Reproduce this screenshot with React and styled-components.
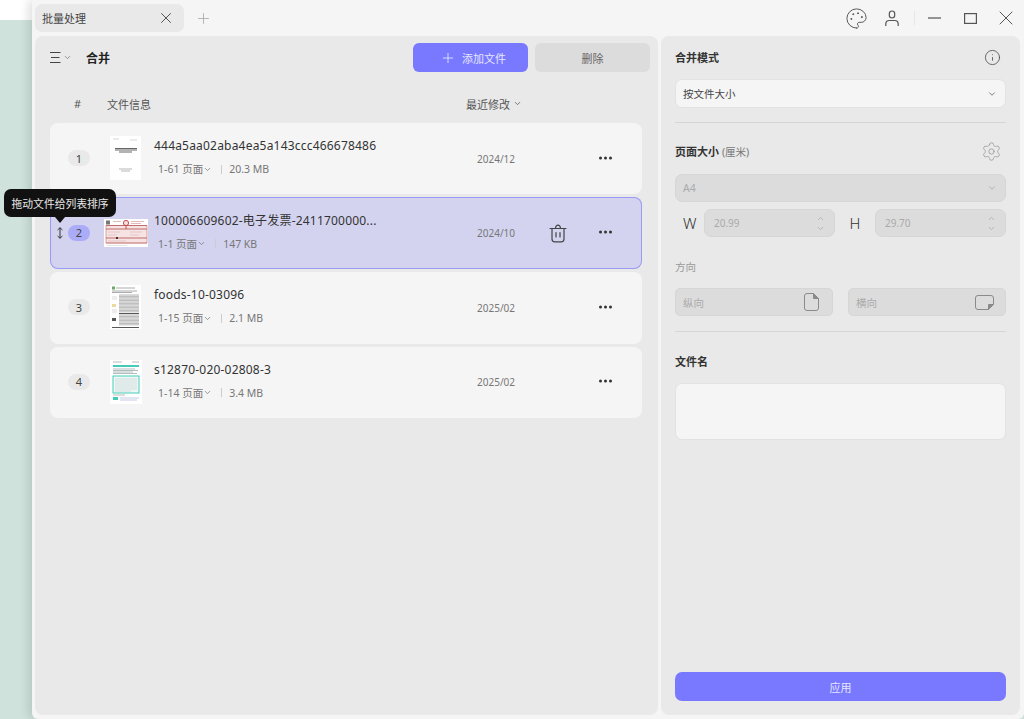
import styled, { createGlobalStyle } from 'styled-components';
import { ChevronDown, ChevronUp, Info, Palette, Plus, Settings, X } from 'lucide-react';

const GlobalStyle = createGlobalStyle`
  html, body {
    margin: 0;
    padding: 0;
    height: 100%;
  }
  body {
    font-family: "Noto Sans", "Noto Sans CJK SC", sans-serif;
    color: #333;
  }
  * {
    box-sizing: border-box;
  }
`;

const Desktop = styled.div`
  width: 1024px;
  height: 719px;
  overflow: hidden;
  padding-left: 32px;
  background: linear-gradient(#fff 0, #fff 20px, #cfe3dc 20px);
`;

const Window = styled.div`
  height: 100%;
  display: flex;
  flex-direction: column;
  padding: 0 3px 4px 3px;
  background: #f5f5f5;
  border-radius: 0 0 6px 6px;
  box-shadow: -4px 0 10px rgba(0, 0, 0, 0.12);
`;

const TitleBar = styled.div`
  flex: 0 0 36px;
  display: flex;
  align-items: flex-start;
  padding-top: 4px;
`;

const Tab = styled.div`
  width: 149px;
  height: 28px;
  display: flex;
  align-items: center;
  justify-content: space-between;
  padding: 0 9px 0 7px;
  background: #e9e9e9;
  border-radius: 7px;
  font-size: 11px;
  color: #444;
`;

const NewTab = styled.div`
  width: 38px;
  height: 28px;
  display: flex;
  align-items: center;
  justify-content: center;
  color: #aaa;
`;

const WindowTools = styled.div`
  margin-left: auto;
  height: 28px;
  display: flex;
  align-items: center;
  color: #555;
`;

const ToolSlot = styled.div`
  width: ${(p) => p.$w}px;
  display: flex;
  justify-content: center;
`;

const ToolDivider = styled.div`
  width: 1px;
  height: 14px;
  margin: 0 4px;
  background: #e6e6e6;
`;

const Panels = styled.div`
  flex: 1;
  min-height: 0;
  display: flex;
  gap: 3px;
`;

const LeftPanel = styled.div`
  width: 623px;
  padding: 7px 8px 0 15px;
  background: #e9e9e9;
  border-radius: 8px;
`;

const RightPanel = styled.div`
  width: 359px;
  display: flex;
  flex-direction: column;
  padding: 0 14px 14px;
  background: #e9e9e9;
  border-radius: 8px;
`;

const Toolbar = styled.div`
  display: flex;
  align-items: center;
  height: 29px;
`;

const MenuToggle = styled.div`
  width: 36px;
  display: flex;
  align-items: center;
  gap: 2px;
  color: #444;
`;

const ToolbarTitle = styled.div`
  flex: 1;
  font-size: 12px;
  font-weight: 700;
  color: #222;
`;

const ActionButton = styled.div`
  width: 115px;
  height: 29px;
  display: flex;
  align-items: center;
  justify-content: center;
  gap: 6px;
  margin-left: 7px;
  padding-left: ${(p) => (p.$primary ? 5 : 0)}px;
  border-radius: 6px;
  font-size: 11px;
  background: ${(p) => (p.$primary ? '#7879ff' : '#dcdcdc')};
  color: ${(p) => (p.$primary ? '#e6e6ff' : '#666')};
`;

const ListHeader = styled.div`
  height: 51px;
  display: flex;
  align-items: center;
  padding-top: 12px;
  font-size: 11px;
  color: #555;
`;

const HeadNumber = styled.div`
  width: 57px;
  padding-left: 24px;
`;

const HeadInfo = styled.div`
  width: 359px;
`;

const HeadDate = styled.div`
  display: flex;
  align-items: center;
  gap: 3px;
`;

const RowList = styled.div`
  width: 592px;
  display: flex;
  flex-direction: column;
  gap: 3.1px;
`;

const Row = styled.div`
  position: relative;
  height: ${(p) => (p.$active ? 72 : 71.2)}px;
  display: flex;
  align-items: center;
  border-radius: 8px;
  background: ${(p) => (p.$active ? '#d3d3f0' : '#f5f5f5')};
  box-shadow: ${(p) => (p.$active ? 'inset 0 0 0 1px #9a9bf5' : 'none')};
`;

const DragSlot = styled.div`
  width: 18px;
  padding-left: 7px;
  display: flex;
  color: #333;
`;

const NumberPill = styled.div`
  width: 22px;
  height: 16px;
  margin: -1px 20px 0 0;
  display: flex;
  align-items: center;
  justify-content: center;
  border-radius: 8px;
  font-size: 11px;
  color: #444;
  background: ${(p) => (p.$active ? '#abacf8' : '#e9e9e9')};
`;

const ThumbSlot = styled.div`
  margin-left: ${(p) => (p.$wide ? -6 : 0)}px;
  margin-top: -1px;
  flex: 0 0 ${(p) => (p.$wide ? 50 : 44)}px;
  display: flex;
  svg {
    display: block;
  }
`;

const FileInfo = styled.div`
  width: 323px;
  display: flex;
  flex-direction: column;
  gap: 8px;
  margin-top: -3px;
`;

const FileName = styled.div`
  font-size: 12px;
  line-height: 16px;
  letter-spacing: 0.2px;
  color: #333;
  white-space: nowrap;
`;

const FileMeta = styled.div`
  display: flex;
  align-items: center;
  padding-left: 4px;
  font-size: 10.5px;
  line-height: 14px;
  color: #777;
`;

const MetaDivider = styled.span`
  width: 1px;
  height: 9px;
  margin: 0 7px 0 9px;
  background: #ccc;
`;

const DateCell = styled.div`
  width: 72px;
  font-size: 10px;
  color: #777;
`;

const TrashSlot = styled.div`
  width: 37px;
  display: flex;
  color: #444;
`;

const MoreDots = styled.div`
  position: absolute;
  right: 30px;
  top: 50%;
  margin-top: -1px;
  display: flex;
  gap: 2px;
  transform: translateY(-50%);
  span {
    width: 3px;
    height: 3px;
    border-radius: 50%;
    background: #333;
  }
`;

const Tooltip = styled.div`
  position: absolute;
  left: -46px;
  top: -8px;
  height: 28px;
  padding: 0 7.5px;
  display: flex;
  align-items: center;
  background: #111;
  border-radius: 7px;
  color: #e8e8e8;
  font-size: 10.8px;
  white-space: nowrap;
  z-index: 2;
  &::after {
    content: '';
    position: absolute;
    left: 51px;
    bottom: -6px;
    border-left: 5px solid transparent;
    border-right: 5px solid transparent;
    border-top: 6px solid #111;
  }
`;

const SectionHead = styled.div`
  display: flex;
  align-items: center;
  justify-content: space-between;
  height: 16px;
  font-size: 11px;
  font-weight: 700;
  color: #333;
  margin-top: ${(p) => p.$top}px;
  small {
    font-size: 10.5px;
    font-weight: 400;
    color: #777;
  }
  svg {
    color: ${(p) => p.$iconColor || '#444'};
    margin-right: ${(p) => p.$iconGap || 5}px;
  }
`;

const SelectBox = styled.div`
  height: ${(p) => (p.$disabled ? 28 : 29)}px;
  margin-top: ${(p) => p.$top}px;
  display: flex;
  align-items: center;
  justify-content: space-between;
  padding: 0 8px 0 7px;
  border-radius: 7px;
  font-size: 10.5px;
  background: ${(p) => (p.$disabled ? '#dcdcdc' : '#f5f5f5')};
  color: ${(p) => (p.$disabled ? '#aaa' : '#444')};
  border: 1px solid ${(p) => (p.$disabled ? '#d6d6d6' : '#e2e2e2')};
`;

const Divider = styled.div`
  height: 1px;
  margin-top: ${(p) => p.$top}px;
  background: #d6d6d6;
`;

const SizeRow = styled.div`
  display: flex;
  align-items: center;
  margin-top: 7px;
`;

const SizeLetter = styled.div`
  width: ${(p) => p.$w}px;
  text-align: ${(p) => (p.$center ? 'center' : 'left')};
  padding-left: ${(p) => (p.$center ? 0 : 8)}px;
  font-size: 15px;
  font-weight: 300;
  color: #333;
`;

const NumberInput = styled.div`
  width: 131px;
  height: 28px;
  display: flex;
  align-items: center;
  justify-content: space-between;
  padding: 0 9px;
  background: #dcdcdc;
  border: 1px solid #d6d6d6;
  border-radius: 7px;
  font-size: 10px;
  color: #aaa;
`;

const Stepper = styled.div`
  display: flex;
  flex-direction: column;
  gap: 1px;
`;

const MutedLabel = styled.div`
  margin-top: 22px;
  font-size: 10.5px;
  line-height: 16px;
  color: #999;
`;

const OrientationRow = styled.div`
  display: flex;
  justify-content: space-between;
  margin-top: 13px;
`;

const OrientationButton = styled.div`
  width: 158px;
  height: 28px;
  display: flex;
  align-items: center;
  justify-content: space-between;
  padding: 0 ${(p) => p.$pad}px 0 7px;
  background: #dcdcdc;
  border: 1px solid #d6d6d6;
  border-radius: 5px;
  font-size: 10.5px;
  color: #aaa;
`;

const NameArea = styled.div`
  height: 57px;
  margin-top: 14px;
  background: #f5f5f5;
  border: 1px solid #e2e2e2;
  border-radius: 7px;
`;

const ApplyButton = styled.div`
  height: 29px;
  margin-top: auto;
  display: flex;
  align-items: center;
  justify-content: center;
  background: #7879ff;
  border-radius: 7px;
  font-size: 11px;
  color: #e6e6ff;
`;

// column lines for the small page previews
const lineRows = (start, count, step) =>
  Array.from({ length: count }, (_, i) => `M9 ${start + i * step}h20`).join('');

const PageThumb = ({ kind }) => {
  if (kind === 'invoice') {
    return (
      <svg width="44" height="28" viewBox="0 0 44 28">
        <rect width="44" height="28" fill="#fff" />
        <rect x="2" y="6.500" width="41" height="18" fill="#f6e4e4" />
        <rect x="2" y="1.500" width="4" height="4" fill="#777" />
        <circle cx="22" cy="4" r="2.600" fill="#f6dede" stroke="#d04a4a" />
        <path d="M9 2.500h8M27 2.500h13M27 4.500h10" stroke="#dca8a8" strokeWidth="0.800" />
        <path d="M2 6.500h41M2 10h41M2 19h41M2 24h41" stroke="#b54a4a" strokeWidth="0.800" />
        <path d="M2 6.500v17.500M43 6.500v17.500" stroke="#c66" strokeWidth="0.600" />
        <path d="M22 6.500v3.500" stroke="#d04a4a" />
        <rect x="12" y="18" width="2" height="2" fill="#333" />
        <path d="M4 13h12M4 16h9M26 13h12M26 16h9M4 22h18" stroke="#e3bcbc" strokeWidth="0.800" />
        <path d="M3 26.500h20" stroke="#ddd" strokeWidth="0.700" />
      </svg>
    );
  }
  if (kind === 'paper') {
    return (
      <svg width="31" height="44" viewBox="0 0 31 44">
        <rect width="31" height="44" fill="#fff" />
        <rect x="2" y="1.500" width="3" height="3" fill="#6a6" />
        <path d="M6 3h19M2 6h25M2 7.500h20" stroke="#888" strokeWidth="0.700" />
        <path d={lineRows(10, 13, 1.4)} stroke="#999" strokeWidth="0.700" />
        <path d={lineRows(30, 8, 1.4)} stroke="#999" strokeWidth="0.700" />
        <path d="M9 28.500h20M2 42.500h27" stroke="#444" strokeWidth="0.900" />
        <path d="M2 12h5M2 14h5M2 25h5M2 27h5" stroke="#ccc" strokeWidth="0.700" />
        <rect x="2" y="19" width="4" height="3" fill="#ead9a0" />
        <rect x="2" y="33" width="4" height="3" fill="#555" />
      </svg>
    );
  }
  if (kind === 'teal') {
    return (
      <svg width="32" height="44" viewBox="0 0 32 44">
        <rect width="32" height="44" fill="#fff" />
        <path d="M3 2h9M22 2h7" stroke="#aaa" strokeWidth="0.800" />
        <rect x="3" y="5" width="26" height="2" fill="#43cdb8" />
        <path d="M3 9h22M3 10.500h25M3 12h20M3 13.500h24" stroke="#7f9090" strokeWidth="0.600" />
        <rect x="3" y="16" width="26" height="17" fill="#eef7f5" stroke="#43cdb8" />
        <path d="M5 19h22M5 21h22M5 23h22M5 25h22M5 27h22M5 29h22M5 31h16" stroke="#c4d4d2" strokeWidth="0.700" />
        <path d="M3 35h12" stroke="#aaa" strokeWidth="0.800" />
        <rect x="3" y="37" width="5" height="3" fill="#43cdb8" />
        <path d="M10 38h19M10 40h17" stroke="#b8bfe0" strokeWidth="0.800" />
      </svg>
    );
  }
  return (
    <svg width="31" height="44" viewBox="0 0 31 44">
      <rect width="31" height="44" fill="#fff" />
      <path d="M3 3h6M20 4h7" stroke="#ccc" strokeWidth="0.800" />
      <path d="M5 12.500h22M5 14h22M9 16h13" stroke="#555" strokeWidth="0.900" />
      <path d="M9 33h13M11 35h9" stroke="#999" strokeWidth="0.700" />
    </svg>
  );
};

const TrashIcon = () => (
  <svg width="18" height="19" viewBox="0 0 18 19" fill="none" stroke="currentColor" strokeWidth="1.200" strokeLinecap="round">
    <path d="M1 4.500h16M6.500 4.200C6.800 2.200 7.600 1.200 9 1.200s2.200 1 2.500 3" />
    <path d="M3 4.500v10.500c0 1.800 1 2.800 2.800 2.800h6.400c1.800 0 2.800-1 2.800-2.800V4.500" />
    <path d="M7 8.500v4.500M11 8.500v4.500" />
  </svg>
);

const DragIcon = () => (
  <svg width="6" height="12" viewBox="0 0 6 12" fill="none" stroke="currentColor" strokeWidth="1">
    <path d="M3 .8v10.400M.6 3 3 .7 5.400 3M.6 9 3 11.300 5.400 9" />
  </svg>
);

const ListIcon = () => (
  <svg width="11" height="13" viewBox="0 0 11 13" stroke="currentColor" strokeWidth="1">
    <path d="M0 1.500h10.500M1 6.500h8.500M0 11.500h10.500" />
  </svg>
);

const UserIcon = () => (
  <svg width="14" height="17" viewBox="0 0 14 17" fill="none" stroke="currentColor" strokeWidth="1.200">
    <rect x="4.300" y="1" width="5.400" height="7" rx="2.700" />
    <path d="M.8 16v-2c0-2 1.500-3.500 3.500-3.500h5.400c2 0 3.500 1.500 3.500 3.500v2" />
  </svg>
);

const PortraitIcon = () => (
  <svg width="15" height="18" viewBox="0 0 15 18" fill="none" stroke="#8a8a8a" strokeWidth="1">
    <path d="M3 .500h6.500L14.500 5.500v9.500a2.500 2.500 0 0 1-2.500 2.500H3A2.500 2.500 0 0 1 .5 15V3A2.500 2.500 0 0 1 3 .5Z" />
    <path d="M9.500.5 14.500 5.500H9.500Z" fill="#8a8a8a" />
  </svg>
);

const LandscapeIcon = () => (
  <svg width="19" height="15" viewBox="0 0 19 15" fill="none" stroke="#8a8a8a" strokeWidth="1">
    <path d="M3 .500h13A2.500 2.500 0 0 1 18.500 3v6.500l-5 5H3A2.500 2.500 0 0 1 .5 12V3A2.500 2.500 0 0 1 3 .5Z" />
    <path d="M18.500 9.500l-5 5v-5Z" fill="#8a8a8a" />
  </svg>
);

const files = [
  { id: 1, name: '444a5aa02aba4ea5a143ccc466678486', pages: '1-61 页面', size: '20.3 MB', date: '2024/12', thumb: 'cover' },
  { id: 2, name: '100006609602-电子发票-2411700000...', pages: '1-1 页面', size: '147 KB', date: '2024/10', thumb: 'invoice', active: true },
  { id: 3, name: 'foods-10-03096', pages: '1-15 页面', size: '2.1 MB', date: '2025/02', thumb: 'paper' },
  { id: 4, name: 's12870-020-02808-3', pages: '1-14 页面', size: '3.4 MB', date: '2025/02', thumb: 'teal' },
];

const FileRow = ({ file }) => (
  <Row $active={file.active}>
    {file.active && <Tooltip>拖动文件给列表排序</Tooltip>}
    <DragSlot>{file.active && <DragIcon />}</DragSlot>
    <NumberPill $active={file.active}>{file.id}</NumberPill>
    <ThumbSlot $wide={file.thumb === 'invoice'}>
      <PageThumb kind={file.thumb} />
    </ThumbSlot>
    <FileInfo>
      <FileName>{file.name}</FileName>
      <FileMeta>
        {file.pages}
        <ChevronDown size={9} />
        <MetaDivider />
        {file.size}
      </FileMeta>
    </FileInfo>
    <DateCell>{file.date}</DateCell>
    <TrashSlot>{file.active && <TrashIcon />}</TrashSlot>
    <MoreDots>
      <span />
      <span />
      <span />
    </MoreDots>
  </Row>
);

const App = () => (
  <>
    <GlobalStyle />
    <Desktop>
      <Window>
        <TitleBar>
          <Tab>
            批量处理
            <X size={18} strokeWidth={1.2} />
          </Tab>
          <NewTab>
            <Plus size={17} strokeWidth={1.2} />
          </NewTab>
          <WindowTools>
            <ToolSlot $w={36}>
              <Palette size={23} strokeWidth={1} />
            </ToolSlot>
            <ToolSlot $w={36}>
              <UserIcon />
            </ToolSlot>
            <ToolDivider />
            <ToolSlot $w={30}>
              <svg width="13" height="2" viewBox="0 0 13 2" stroke="#333" strokeWidth="1">
                <path d="M0 1h13" />
              </svg>
            </ToolSlot>
            <ToolSlot $w={42}>
              <svg width="13" height="11" viewBox="0 0 13 11" fill="none" stroke="currentColor" strokeWidth="1.200">
                <rect x="0.600" y="0.600" width="11.800" height="9.800" />
              </svg>
            </ToolSlot>
            <ToolSlot $w={30}>
              <X size={24} strokeWidth={1} />
            </ToolSlot>
          </WindowTools>
        </TitleBar>
        <Panels>
          <LeftPanel>
            <Toolbar>
              <MenuToggle>
                <ListIcon />
                <ChevronDown size={9} color="#777" />
              </MenuToggle>
              <ToolbarTitle>合并</ToolbarTitle>
              <ActionButton $primary>
                <Plus size={16} strokeWidth={1.300} />
                添加文件
              </ActionButton>
              <ActionButton>删除</ActionButton>
            </Toolbar>
            <ListHeader>
              <HeadNumber>#</HeadNumber>
              <HeadInfo>文件信息</HeadInfo>
              <HeadDate>
                最近修改
                <ChevronDown size={9} />
              </HeadDate>
            </ListHeader>
            <RowList>
              {files.map((file) => (
                <FileRow key={file.id} file={file} />
              ))}
            </RowList>
          </LeftPanel>
          <RightPanel>
            <SectionHead $top={13}>
              合并模式
              <Info size={17} strokeWidth={1.100} />
            </SectionHead>
            <SelectBox $top={14}>
              按文件大小
              <ChevronDown size={10} color="#666" />
            </SelectBox>
            <Divider $top={14} />
            <SectionHead $top={20} $iconColor="#999" $iconGap={4}>
              <span>
                页面大小 <small>(厘米)</small>
              </span>
              <Settings size={21} strokeWidth={0.950} />
            </SectionHead>
            <SelectBox $top={15} $disabled>
              A4
              <ChevronDown size={10} color="#aaa" />
            </SelectBox>
            <SizeRow>
              <SizeLetter $w={29}>W</SizeLetter>
              <NumberInput>
                20.99
                <Stepper>
                  <ChevronUp size={9} />
                  <ChevronDown size={9} />
                </Stepper>
              </NumberInput>
              <SizeLetter $w={40} $center>
                H
              </SizeLetter>
              <NumberInput>
                29.70
                <Stepper>
                  <ChevronUp size={9} />
                  <ChevronDown size={9} />
                </Stepper>
              </NumberInput>
            </SizeRow>
            <MutedLabel>方向</MutedLabel>
            <OrientationRow>
              <OrientationButton $pad={13}>
                纵向
                <PortraitIcon />
              </OrientationButton>
              <OrientationButton $pad={11}>
                横向
                <LandscapeIcon />
              </OrientationButton>
            </OrientationRow>
            <Divider $top={15} />
            <SectionHead $top={21}>文件名</SectionHead>
            <NameArea />
            <ApplyButton>应用</ApplyButton>
          </RightPanel>
        </Panels>
      </Window>
    </Desktop>
  </>
);

export default App;
